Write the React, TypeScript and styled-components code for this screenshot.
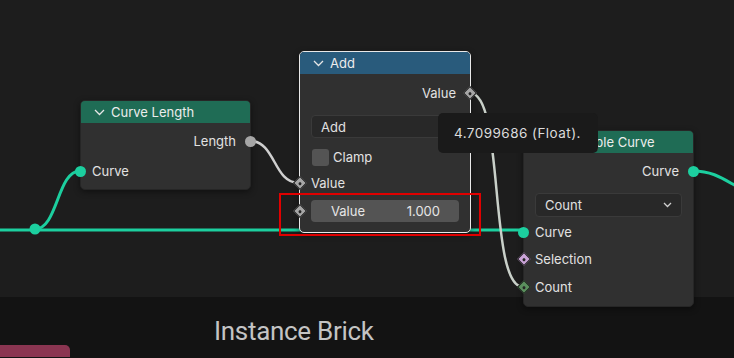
import React from "react";
import styled, { createGlobalStyle } from "styled-components";

const Global = createGlobalStyle`
  html, body { margin: 0; padding: 0; background: #1d1d1d; }
  body { font-family: Inter, "Noto Sans", sans-serif; }
  #root { width: 734px; height: 358px; overflow: hidden; }
`;

const Page = styled.div`
  width: 734px;
  height: 358px;
  display: flex;
  flex-direction: column;
  background: #1d1d1d;
`;

const Canvas = styled.div`
  position: relative;
  height: 297px;
  flex: none;
  background: #1d1d1d;
  z-index: 2;
`;

const Wires = styled.svg`
  position: absolute;
  left: 0;
  top: 0;
  width: 734px;
  height: 297px;
  overflow: visible;
`;

const Node = styled.div<{ $x: number; $y: number; $w: number; $selected?: boolean }>`
  position: absolute;
  left: ${(p) => p.$x}px;
  top: ${(p) => p.$y}px;
  width: ${(p) => p.$w}px;
  box-sizing: border-box;
  background: #303030;
  border-radius: 5px;
  border: 1px solid ${(p) => (p.$selected ? "#e8e8e8" : "#262626")};
  box-shadow: 0 2px 6px rgba(0, 0, 0, 0.45);
  color: #e2e2e2;
  font-size: 13px;
`;

const Header = styled.div<{ $color: string }>`
  height: 22px;
  display: flex;
  align-items: center;
  gap: 6px;
  padding-left: 13px;
  background: ${(p) => p.$color};
  border-radius: 4px 4px 0 0;
  color: #ececec;
  font-size: 13px;
`;

const Body = styled.div<{ $pt: number; $pb: number }>`
  display: flex;
  flex-direction: column;
  padding: ${(p) => p.$pt}px 11px ${(p) => p.$pb}px 11px;
`;

const Row = styled.div<{ $mt?: number; $out?: boolean }>`
  position: relative;
  height: 22px;
  margin-top: ${(p) => p.$mt ?? 0}px;
  display: flex;
  align-items: center;
  justify-content: ${(p) => (p.$out ? "flex-end" : "flex-start")};
  padding-right: ${(p) => (p.$out ? 3 : 0)}px;
  white-space: nowrap;
`;

const CircleSocket = styled.span<{ $color: string; $side: "l" | "r" }>`
  position: absolute;
  top: 50%;
  ${(p) => (p.$side === "l" ? "left: -17px;" : "right: -17px;")}
  width: 11px;
  height: 11px;
  margin-top: -5.5px;
  border-radius: 50%;
  background: ${(p) => p.$color};
`;

const DiamondSocket = styled.span<{ $color: string; $side: "l" | "r" }>`
  position: absolute;
  top: 50%;
  ${(p) => (p.$side === "l" ? "left: -16px;" : "right: -16px;")}
  width: 8px;
  height: 8px;
  margin-top: -5px;
  transform: rotate(45deg);
  background: ${(p) => p.$color};
  border: 1px solid #1a1a1a;
  &::after {
    content: "";
    position: absolute;
    left: 2.5px;
    top: 2.5px;
    width: 3px;
    height: 3px;
    border-radius: 50%;
    background: #262626;
  }
`;

const Dropdown = styled.div<{ $mt: number; $h: number }>`
  height: ${(p) => p.$h}px;
  margin-top: ${(p) => p.$mt}px;
  box-sizing: border-box;
  display: flex;
  align-items: center;
  justify-content: space-between;
  padding: 0 9px 0 9px;
  background: #282828;
  border: 1px solid #3a3a3a;
  border-radius: 4px;
  color: #e0e0e0;
`;

const CheckBox = styled.span`
  width: 17px;
  height: 17px;
  border-radius: 3px;
  background: #545454;
  margin-right: 4px;
  margin-left: 1px;
`;

const NumField = styled.div<{ $mt: number }>`
  position: relative;
  height: 22px;
  margin-top: ${(p) => p.$mt}px;
  display: flex;
  align-items: center;
  justify-content: space-between;
  padding: 0 19px 0 20px;
  background: #545454;
  border-radius: 4px;
  color: #e6e6e6;
`;

const Tooltip = styled.div`
  position: absolute;
  left: 438px;
  top: 113px;
  width: 160px;
  height: 40px;
  box-sizing: border-box;
  padding-left: 16px;
  display: flex;
  align-items: center;
  background: #1a1a1a;
  border-radius: 5px;
  color: #dcdcdc;
  font-size: 13.5px;
  letter-spacing: 0.45px;
  z-index: 5;
`;

const Highlight = styled.div`
  position: absolute;
  left: 279px;
  top: 193px;
  width: 202px;
  height: 43px;
  box-sizing: border-box;
  border: 2px solid #e00000;
  z-index: 6;
`;

const BottomBar = styled.div`
  flex: 1;
  background: #131313;
  display: flex;
  flex-direction: column;
  padding-top: 20px;
`;

const Title = styled.div`
  padding-left: 214px;
  height: 29px;
  line-height: 29px;
  font-family: Roboto, "Noto Sans", sans-serif;
  font-size: 26px;
  letter-spacing: -0.3px;
  color: #c4c4c4;
`;

const Tab = styled.div`
  width: 70px;
  height: 12px;
  margin-top: -1px;
  background: #8a3551;
  border-radius: 0 5px 0 0;
`;

const Chevron = () => (
  <svg width="11" height="7" viewBox="0 0 11 7">
    <polyline points="1,1 5.5,5.5 10,1" fill="none" stroke="#e6e6e6" strokeWidth="1.3" />
  </svg>
);

const SmallChevron = () => (
  <svg width="9" height="6" viewBox="0 0 9 6">
    <polyline points="1,1 4.5,4.5 8,1" fill="none" stroke="#d0d0d0" strokeWidth="1.3" />
  </svg>
);

const GEO = "#1ccf9f";
const GRAY = "#a6a6a6";

export default function App() {
  return (
    <Page>
      <Global />
      <Canvas>
        <Wires viewBox="0 0 734 297">
          <path d="M0 230 L523 230" stroke={GEO} strokeWidth="3" fill="none" />
          <path d="M35 229 C 58 229 57 171 80 171" stroke={GEO} strokeWidth="3" fill="none" />
          <circle cx="35" cy="229" r="5.5" fill={GEO} />
          <path d="M693 171 C 712 171 722 178 736 186" stroke={GEO} strokeWidth="3" fill="none" />
          <path d="M250 141 C 276 141 273 183 299 183" stroke="#cfcfcf" strokeWidth="2.5" fill="none" />
          <path d="M470 93 C 505 93 488 287 523 287" stroke="#c9d0c9" strokeWidth="2.5" fill="none" />
        </Wires>

        <Node $x={80} $y={100} $w={171}>
          <Header $color="#1f6c55">
            <Chevron />
            Curve Length
          </Header>
          <Body $pt={7} $pb={7}>
            <Row $out>
              Length
              <CircleSocket $color={GRAY} $side="r" />
            </Row>
            <Row $mt={8}>
              Curve
              <CircleSocket $color={GEO} $side="l" />
            </Row>
          </Body>
        </Node>

        <Node $x={299} $y={51} $w={172} $selected>
          <Header $color="#295b7c">
            <Chevron />
            Add
          </Header>
          <Body $pt={8} $pb={10}>
            <Row $out>
              Value
              <DiamondSocket $color={GRAY} $side="r" />
            </Row>
            <Dropdown $mt={11} $h={23}>
              <span>Add</span>
              <SmallChevron />
            </Dropdown>
            <Row $mt={8}>
              <CheckBox />
              Clamp
            </Row>
            <Row $mt={4}>
              Value
              <DiamondSocket $color={GRAY} $side="l" />
            </Row>
            <NumField $mt={6}>
              <span>Value</span>
              <span>1.000</span>
              <DiamondSocket $color={GRAY} $side="l" />
            </NumField>
          </Body>
        </Node>

        <Node $x={523} $y={130} $w={171}>
          <Header $color="#1f6c55">
            <Chevron />
            Resample Curve
          </Header>
          <Body $pt={7} $pb={8}>
            <Row $out>
              Curve
              <CircleSocket $color={GEO} $side="r" />
            </Row>
            <Dropdown $mt={11} $h={24}>
              <span>Count</span>
              <SmallChevron />
            </Dropdown>
            <Row $mt={4}>
              Curve
              <CircleSocket $color={GEO} $side="l" />
            </Row>
            <Row $mt={5}>
              Selection
              <DiamondSocket $color="#c9a3d6" $side="l" />
            </Row>
            <Row $mt={6}>
              Count
              <DiamondSocket $color="#5a8f5d" $side="l" />
            </Row>
          </Body>
        </Node>

        <Tooltip>4.7099686 (Float).</Tooltip>
        <Highlight />
      </Canvas>
      <BottomBar>
        <Title>Instance Brick</Title>
        <Tab />
      </BottomBar>
    </Page>
  );
}
